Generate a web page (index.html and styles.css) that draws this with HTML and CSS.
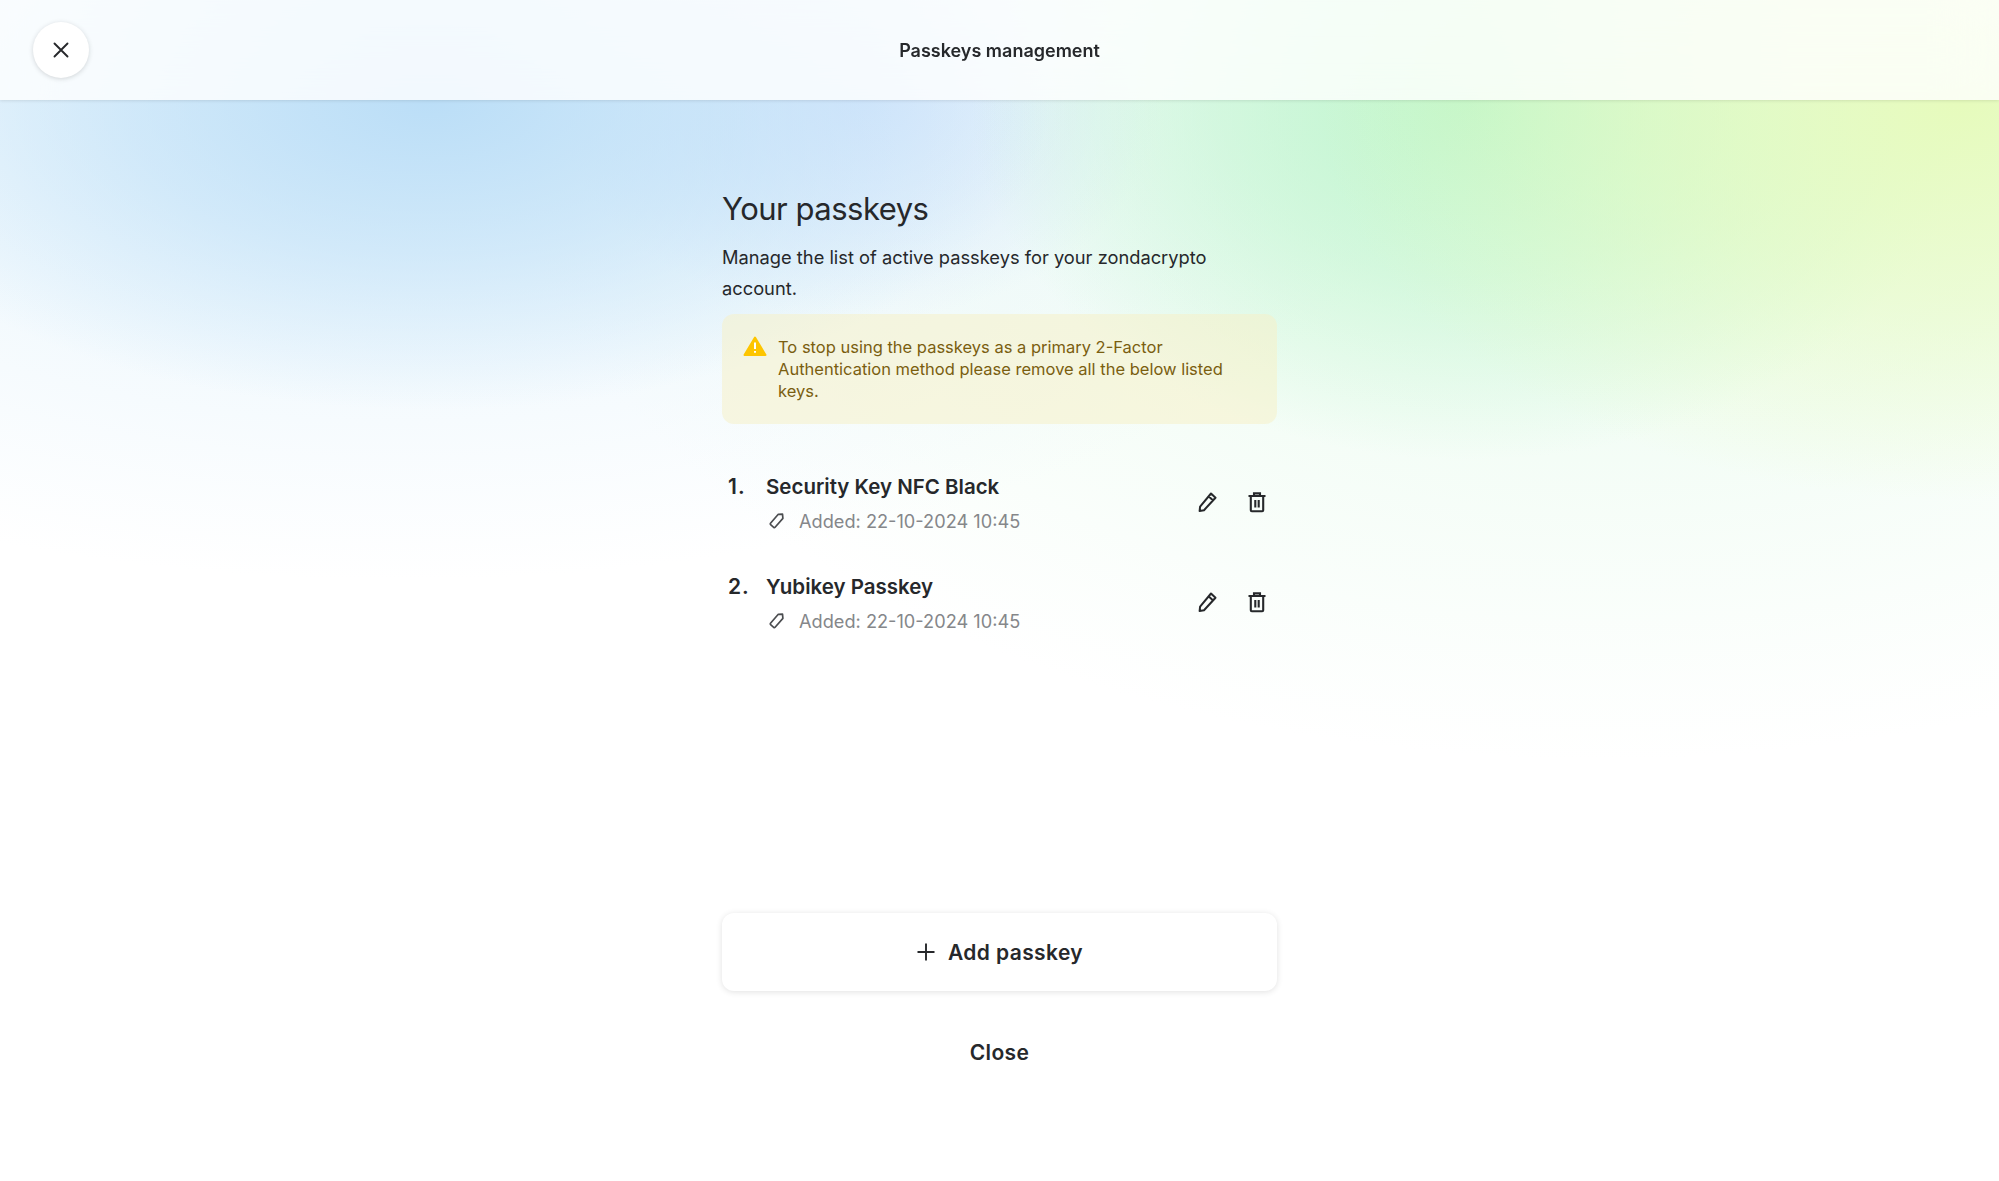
FILE: index.html
```html
<!DOCTYPE html>
<html>
<head>
  <title>Passkeys management</title>
  <link rel="stylesheet" href="styles.css">
</head>
<body>
  <div class="top-bar">
    <button class="round-button">
      <svg width="20" height="20" viewBox="0 0 20 20"><path d="M3.5 3.5l13 13M16.5 3.5l-13 13" fill="none" stroke="#26282b" stroke-width="1.9" stroke-linecap="round"/></svg>
    </button>
    <div class="top-title">Passkeys management</div>
  </div>
  <div class="content">
    <h1>Your passkeys</h1>
    <p class="intro">Manage the list of active passkeys for your zondacrypto account.</p>
    <div class="alert">
      <svg class="alert-icon" width="24" height="20" viewBox="0 0 24 20"><path d="M12 1.5L22.5 19H1.5z" fill="#fdc500" stroke="#fdc500" stroke-width="2" stroke-linejoin="round"/><path d="M12 6.5v6.5M12 15v1.8" stroke="#fff" stroke-width="2"/></svg>
      <div>To stop using the passkeys as a primary 2-Factor Authentication method please remove all the below listed keys.</div>
    </div>
    <div class="key-list">
      <div class="key-row">
        <div class="key-num">1.</div>
        <div class="key-info">
          <div class="key-name">Security Key NFC Black</div>
          <div class="key-added">
            <svg width="20" height="20" viewBox="0 0 20 20"><path d="M12.3 3.3l4.2-.2.4 4.3-7.8 8.8a1 1 0 0 1-1.4.1l-3.1-2.7a1 1 0 0 1-.1-1.4z" fill="none" stroke="#4b4d50" stroke-width="1.7" stroke-linejoin="round"/></svg>
            Added: 22-10-2024 10:45
          </div>
        </div>
        <svg class="act-icon" width="24" height="24" viewBox="0 0 24 24"><path d="M16 3.5l4.5 4.2L9 20.2 4.6 21l.5-4.4zM13.6 6.2l4.5 4.2" fill="none" stroke="#26282b" stroke-width="2" stroke-linejoin="round"/></svg>
        <svg class="act-icon" width="24" height="24" viewBox="0 0 24 24"><path d="M3.5 6h17M9 6V3.4h6V6M5.8 6v14.2a1 1 0 0 0 1 1h10.4a1 1 0 0 0 1-1V6M10.3 10v7.5M13.7 10v7.5" fill="none" stroke="#26282b" stroke-width="2.1"/></svg>
      </div>
      <div class="key-row">
        <div class="key-num">2.</div>
        <div class="key-info">
          <div class="key-name">Yubikey Passkey</div>
          <div class="key-added">
            <svg width="20" height="20" viewBox="0 0 20 20"><path d="M12.3 3.3l4.2-.2.4 4.3-7.8 8.8a1 1 0 0 1-1.4.1l-3.1-2.7a1 1 0 0 1-.1-1.4z" fill="none" stroke="#4b4d50" stroke-width="1.7" stroke-linejoin="round"/></svg>
            Added: 22-10-2024 10:45
          </div>
        </div>
        <svg class="act-icon" width="24" height="24" viewBox="0 0 24 24"><path d="M16 3.5l4.5 4.2L9 20.2 4.6 21l.5-4.4zM13.6 6.2l4.5 4.2" fill="none" stroke="#26282b" stroke-width="2" stroke-linejoin="round"/></svg>
        <svg class="act-icon" width="24" height="24" viewBox="0 0 24 24"><path d="M3.5 6h17M9 6V3.4h6V6M5.8 6v14.2a1 1 0 0 0 1 1h10.4a1 1 0 0 0 1-1V6M10.3 10v7.5M13.7 10v7.5" fill="none" stroke="#26282b" stroke-width="2.1"/></svg>
      </div>
    </div>
    <button class="add-button">
      <svg width="20" height="20" viewBox="0 0 20 20"><path d="M10 1.5v17M1.5 10h17" stroke="#26282b" stroke-width="1.9"/></svg>
      Add passkey
    </button>
    <button class="close-button">Close</button>
  </div>
</body>
</html>
```

FILE: styles.css
```css
html, body {
  height: 100%;
}
body {
  margin: 0;
  font-family: Inter, sans-serif;
  color: #26282b;
  background-color: #fff;
  background-image:
    radial-gradient(ellipse 640px 400px at 1960px 100px, #e6fbbc 0%, rgba(230,251,188,0.55) 50%, rgba(230,251,188,0) 100%),
    radial-gradient(ellipse 500px 360px at 1470px 100px, #bdf5cc 0%, rgba(189,245,204,0.55) 50%, rgba(189,245,204,0) 100%),
    radial-gradient(ellipse 620px 310px at 430px 100px, #bbdef7 0%, rgba(187,222,247,0.55) 50%, rgba(187,222,247,0) 100%),
    radial-gradient(ellipse 300px 220px at 860px 100px, #d6e7fc 0%, rgba(214,231,252,0.55) 50%, rgba(214,231,252,0) 100%),
    radial-gradient(ellipse 1050px 480px at 400px 100px, #e6f4fc 0%, rgba(230,244,252,0.55) 50%, rgba(230,244,252,0) 100%),
    radial-gradient(ellipse 1100px 660px at 1600px 100px, #e9fbee 0%, rgba(233,251,238,0.55) 50%, rgba(233,251,238,0) 100%);
  overflow: hidden;
}
.top-bar {
  height: 100px;
  display: flex;
  align-items: center;
  justify-content: center;
  position: relative;
  background-color: rgba(255,255,255,0.8);
  backdrop-filter: blur(30px);
  box-shadow: 0 1px 3px rgba(0,0,0,0.1);
}
.round-button {
  position: absolute;
  left: 33px;
  top: 22px;
  width: 56px;
  height: 56px;
  padding: 0;
  border: none;
  border-radius: 50%;
  background-color: #fff;
  box-shadow: 0 1px 5px rgba(0,0,0,0.16);
  display: flex;
  align-items: center;
  justify-content: center;
}
.top-title {
  font-size: 18px;
  font-weight: 600;
}
.content {
  width: 555px;
  margin: 0 auto;
  padding-top: 89px;
}
h1 {
  margin: 0;
  font-size: 31px;
  line-height: 40px;
  font-weight: 400;
  letter-spacing: -0.5px;
}
.intro {
  margin: 13px 0 0;
  font-size: 18.3px;
  line-height: 31px;
}
.alert {
  margin-top: 10px;
  height: 110px;
  box-sizing: border-box;
  padding: 22px 30px 0 21px;
  border-radius: 12px;
  background-color: rgba(246,240,200,0.55);
  color: #7a5e10;
  font-size: 16.5px;
  line-height: 22px;
  display: flex;
  gap: 11px;
}
.alert-icon {
  flex-shrink: 0;
}
.key-list {
  margin-top: 29px;
}
.key-row {
  height: 100px;
  display: flex;
  align-items: center;
  padding: 0 8px 0 6px;
}
.key-num {
  width: 38px;
  align-self: flex-start;
  padding-top: 20px;
  font-size: 21px;
  line-height: 28px;
  font-weight: 600;
  letter-spacing: 1px;
}
.key-info {
  flex: 1;
  padding-top: 2px;
}
.key-name {
  font-size: 20.5px;
  line-height: 28px;
  font-weight: 600;
}
.key-added {
  margin-top: 6px;
  display: flex;
  align-items: center;
  gap: 13px;
  font-size: 18.2px;
  line-height: 28px;
  color: #85878a;
}
.act-icon {
  margin: 0 0 2px 26px;
}
.add-button {
  margin-top: 260px;
  width: 555px;
  height: 78px;
  display: flex;
  align-items: center;
  justify-content: center;
  gap: 12px;
  border: none;
  border-radius: 12px;
  background-color: #fff;
  box-shadow: 0 1px 6px rgba(0,0,0,0.12);
  color: #26282b;
  font-family: Inter, sans-serif;
  font-size: 21px;
  font-weight: 600;
  letter-spacing: 0.4px;
}
.close-button {
  margin-top: 22px;
  width: 555px;
  height: 78px;
  border: none;
  background: none;
  color: #26282b;
  font-family: Inter, sans-serif;
  font-size: 21px;
  font-weight: 600;
  letter-spacing: 0.4px;
}
```
